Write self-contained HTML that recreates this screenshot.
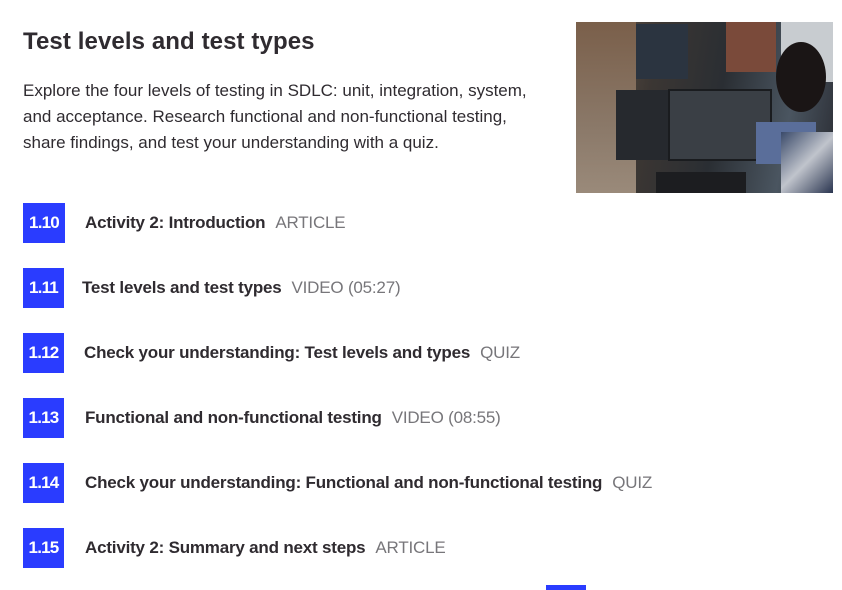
<!DOCTYPE html>
<html><head><meta charset="utf-8"><style>
html,body{margin:0;padding:0;width:842px;height:590px;overflow:hidden;background:#fff;font-family:"Liberation Sans",sans-serif;color:#2d2a2e}
h1{position:absolute;left:23px;top:28px;margin:0;font-size:24px;font-weight:bold;letter-spacing:0.1px;color:#2f2b30}
.desc{position:absolute;left:23px;top:78px;width:560px;font-size:17px;line-height:26px;letter-spacing:0px;color:#2f2b30;white-space:nowrap}
.img{position:absolute;left:576px;top:22px;width:257px;height:171px;overflow:hidden;background:linear-gradient(100deg,#6b5a4a 0%,#3b3633 30%,#2a2e33 55%,#4a5560 80%,#2a2c33 100%)}
.row{position:absolute;left:23px;height:40px;display:flex;align-items:center}
.b{width:41px;height:40px;background:#2a3cff;color:#fff;font-weight:bold;font-size:17px;display:flex;align-items:center;justify-content:center;letter-spacing:-0.8px}
.t{font-weight:bold;font-size:17px;letter-spacing:-0.2px;color:#2f2b30}
.g{font-size:17px;color:#77767a;margin-left:10px;letter-spacing:-0.2px}
.bar{position:absolute;left:546px;top:585px;width:40px;height:5px;background:#2a3cff}
</style></head><body>
<h1>Test levels and test types</h1>
<div class="desc">Explore the four levels of testing in SDLC: unit, integration, system,<br>and acceptance. Research functional and non-functional testing,<br>share findings, and test your understanding with a quiz.</div>
<div class="img">
<div style="position:absolute;left:0;top:0;width:60px;height:171px;background:linear-gradient(180deg,#7a5f4a,#8a7868 60%,#9a8a7a)"></div>
<div style="position:absolute;left:60px;top:2px;width:52px;height:55px;background:#2b3440"></div>
<div style="position:absolute;left:40px;top:68px;width:52px;height:70px;background:#26292e"></div>
<div style="position:absolute;left:92px;top:67px;width:100px;height:68px;background:#3a3f45;border:2px solid #1a1c1f"></div>
<div style="position:absolute;left:150px;top:0;width:50px;height:50px;background:#7a4a3a"></div>
<div style="position:absolute;left:205px;top:0;width:52px;height:60px;background:#c8ccd0"></div>
<div style="position:absolute;left:180px;top:100px;width:60px;height:42px;background:#5a6e9a"></div>
<div style="position:absolute;left:205px;top:110px;width:52px;height:61px;background:linear-gradient(135deg,#3a4a6a,#c0c4cc,#2a3550)"></div>
<div style="position:absolute;left:200px;top:20px;width:50px;height:70px;border-radius:50%;background:#1a1515"></div>
<div style="position:absolute;left:80px;top:150px;width:90px;height:21px;background:#1c1d20"></div>
</div>
<div class="row" style="top:203px"><div class="b" style="width:42px">1.10</div><span class="t" style="margin-left:20px">Activity 2: Introduction</span><span class="g">ARTICLE</span></div>
<div class="row" style="top:268px"><div class="b">1.11</div><span class="t" style="margin-left:18px">Test levels and test types</span><span class="g">VIDEO (05:27)</span></div>
<div class="row" style="top:333px"><div class="b">1.12</div><span class="t" style="margin-left:20px">Check your understanding: Test levels and types</span><span class="g">QUIZ</span></div>
<div class="row" style="top:398px"><div class="b">1.13</div><span class="t" style="margin-left:21px">Functional and non-functional testing</span><span class="g">VIDEO (08:55)</span></div>
<div class="row" style="top:463px"><div class="b">1.14</div><span class="t" style="margin-left:21px">Check your understanding: Functional and non-functional testing</span><span class="g">QUIZ</span></div>
<div class="row" style="top:528px"><div class="b">1.15</div><span class="t" style="margin-left:21px">Activity 2: Summary and next steps</span><span class="g">ARTICLE</span></div>
<div class="bar"></div>
</body></html>
